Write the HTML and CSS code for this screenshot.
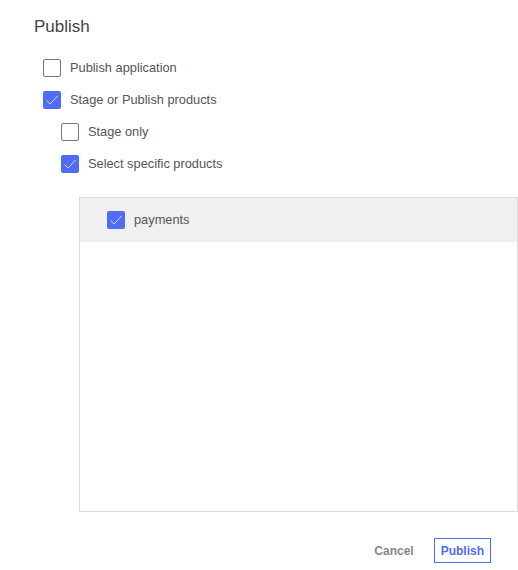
FILE: index.html
```html
<!DOCTYPE html>
<html>
<head>
<meta charset="utf-8">
<link rel="stylesheet" href="styles.css">
</head>
<body>
<div class="dialog">
  <h1 class="title">Publish</h1>
  <ul class="options">
    <li class="opt"><span class="cb"></span><span class="label">Publish application</span></li>
    <li class="opt"><span class="cb checked"><svg viewBox="0 0 18 18"><path d="M3.5 9.5 L7.2 13 L14.5 5" /></svg></span><span class="label">Stage or Publish products</span></li>
    <li class="opt sub"><span class="cb"></span><span class="label">Stage only</span></li>
    <li class="opt sub"><span class="cb checked"><svg viewBox="0 0 18 18"><path d="M3.5 9.5 L7.2 13 L14.5 5" /></svg></span><span class="label">Select specific products</span></li>
  </ul>
  <div class="products">
    <div class="prod-row"><span class="cb checked"><svg viewBox="0 0 18 18"><path d="M3.5 9.5 L7.2 13 L14.5 5" /></svg></span><span class="label">payments</span></div>
  </div>
  <div class="actions">
    <button class="btn cancel">Cancel</button>
    <button class="btn primary">Publish</button>
  </div>
</div>
</body>
</html>
```
FILE: styles.css
```css
html, body {
  margin: 0;
  padding: 0;
  background: #fff;
}
body {
  font-family: "Liberation Sans", Arial, sans-serif;
  color: #555;
}
.dialog {
  width: 518px;
  padding-top: 16px;
}
.title {
  margin: 0 0 14px 34px;
  font-size: 17px;
  line-height: 22px;
  font-weight: 400;
  color: #444;
}
.options {
  list-style: none;
  margin: 0;
  padding: 0 0 0 43px;
}
.opt {
  display: flex;
  align-items: center;
  height: 32px;
  gap: 9px;
}
.opt.sub {
  padding-left: 18px;
}
.cb {
  box-sizing: border-box;
  width: 18px;
  height: 18px;
  border: 1px solid #777;
  border-radius: 2px;
  background: #fff;
  flex: none;
  display: flex;
}
.cb.checked {
  background: #4f6cf6;
  border: none;
}
.cb svg {
  width: 18px;
  height: 18px;
}
.cb path {
  fill: none;
  stroke: #d4dcff;
  stroke-width: 1;
}
.label {
  font-size: 12.8px;
  line-height: 16px;
  color: #555;
}
.products {
  box-sizing: border-box;
  margin: 17px 0 0 79px;
  width: 439px;
  height: 315px;
  border: 1px solid #dcdcdc;
}
.prod-row {
  display: flex;
  align-items: center;
  gap: 9px;
  height: 44px;
  padding-left: 27px;
  background: #f0f0f0;
}
.actions {
  display: flex;
  justify-content: flex-end;
  align-items: center;
  gap: 19px;
  margin-top: 26px;
  padding-right: 27px;
}
.btn {
  font-family: "Liberation Sans", Arial, sans-serif;
  font-size: 12px;
  font-weight: 700;
  background: #fff;
  border: 1px solid transparent;
  height: 25px;
  padding: 0 6px;
  cursor: pointer;
}
.cancel {
  color: #888;
  padding: 0;
}
.primary {
  color: #4f6cf6;
  border-color: #4f6cf6;
}
```
